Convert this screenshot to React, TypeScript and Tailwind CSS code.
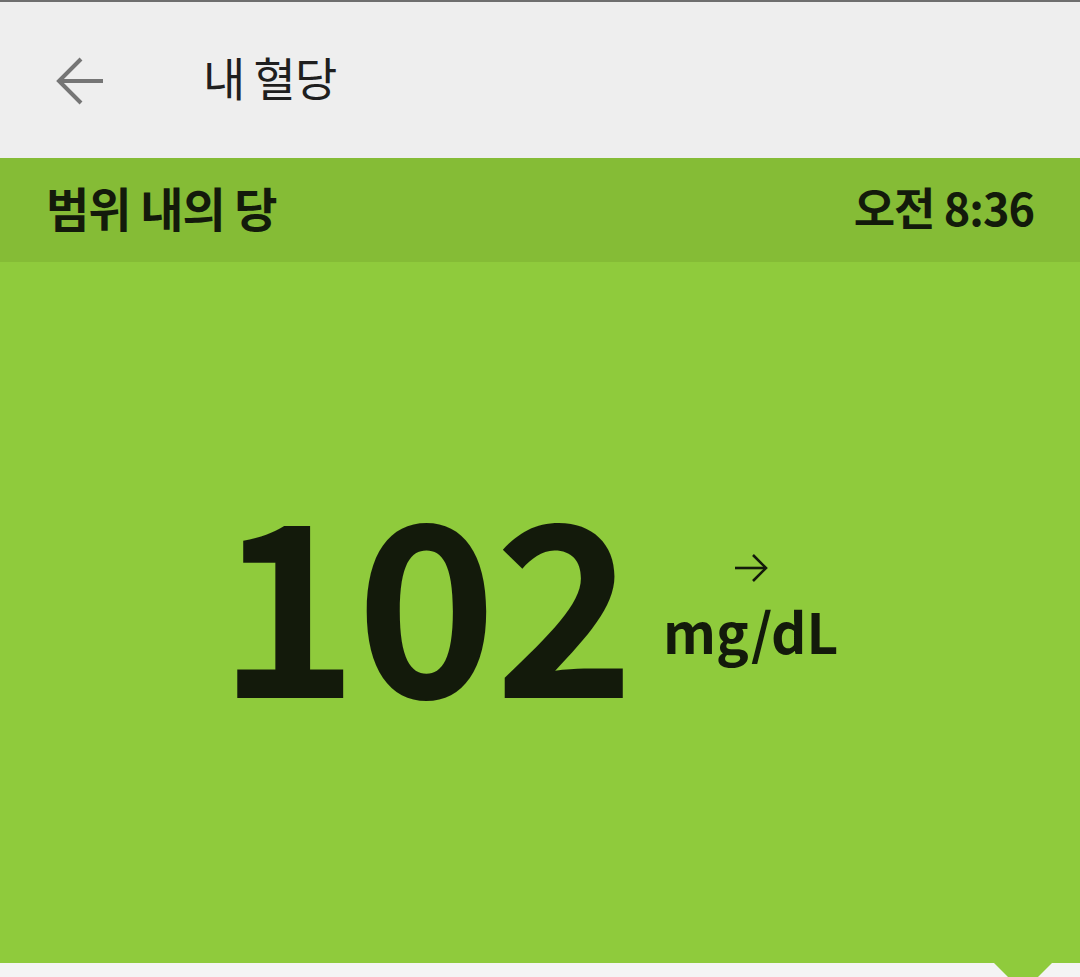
export default function App() {
  const font = { fontFamily: '"Noto Sans CJK KR", "Noto Sans", sans-serif' };

  return (
    <div
      className="w-full h-[977px] overflow-hidden bg-[#f4f4f4] flex flex-col border-t-2 border-[#6e6e6e]"
      style={font}
    >
      {/* app bar */}
      <div className="h-[156px] shrink-0 bg-[#eeeeee] flex items-center">
        <svg
          width="50"
          height="50"
          viewBox="0 0 50 50"
          className="ml-[55px] mt-[2px] text-[#757575]"
          fill="none"
          stroke="currentColor"
          strokeWidth="4"
        >
          <path d="M4 25H48" />
          <path d="M26 3L4 25L26 47" />
        </svg>
        <h1 className="ml-[98px] text-[46px] tracking-[-1px] text-[#1f1f1f] font-normal leading-none mb-[8px]">
          내 혈당
        </h1>
      </div>

      {/* status band */}
      <div className="h-[104px] shrink-0 bg-[#85bc36] flex items-center justify-between pl-[46px] pr-[46px] pb-[8px] text-[#131a0b] font-bold">
        <span className="text-[47px] tracking-[-1px] leading-none">범위 내의 당</span>
        <span className="text-[45px] tracking-[-1px] leading-none">오전 8:36</span>
      </div>

      {/* reading */}
      <div className="relative h-[701px] shrink-0 bg-[#8fcb3c] flex items-center justify-center pb-[36px] text-[#131a0b]">
        <div className="flex items-end gap-[30px] ml-[-24px]">
          <span className="text-[238px] font-bold leading-none tracking-[-2px]">102</span>
          <div className="flex flex-col items-center mb-[56px]">
            <svg width="38" height="34" viewBox="0 0 38 34" fill="none" stroke="currentColor" strokeWidth="2.6">
              <path d="M3 17H34" />
              <path d="M21 4L34 17L21 30" />
            </svg>
            <span className="text-[55px] font-bold leading-none mt-[18px]">mg/dL</span>
          </div>
        </div>
        <div className="absolute right-[28px] bottom-[-29px] w-0 h-0 border-l-[29px] border-r-[29px] border-t-[29px] border-l-transparent border-r-transparent border-t-[#8fcb3c]" />
      </div>
    </div>
  );
}
